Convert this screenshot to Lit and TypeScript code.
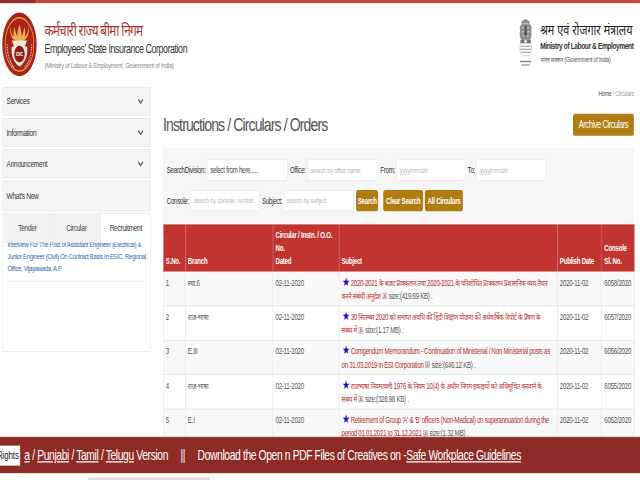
import { LitElement, html, css } from "lit";
import { customElement } from "lit/decorators.js";

const rows = [
  { n: "1", b: "स्था.6", s: "2020-2021 के बजट प्राक्कलन तथा 2020-2021 के परिशोधित प्राक्कलन प्रशासनिक व्यय तैयार करने संबंधी अनुदेश", z: "size:(419.69 KB) .", c: "6058/2020" },
  { n: "2", b: "राज-भाषा", s: "30 सितम्बर 2020 को समाप्त अवधि की हिंदी शिक्षण योजना की अर्धवार्षिक रिपोर्ट के प्रेषण के संबंध\u00A0में", z: "size:(1.17 MB) .", c: "6057/2020" },
  { n: "3", b: "E.III", s: "Corrigendum Memorandum - Continuation of Ministerial / Non Ministerial posts as on 31.03.2019 in ESI Corporation", z: "size:(646.12 KB) .", c: "6056/2020" },
  { n: "4", b: "राज-भाषा", s: "राजभाषा नियमावली 1976 के नियम 10(4) के अधीन निगम इकाइयों को अधिसूचित करवाने के संबंध\u00A0में", z: "size:(328.98 KB) .", c: "6055/2020" },
  { n: "5", b: "E.I", s: "Retirement of Group 'A' & 'B' officers (Non-Medical) on superannuation during the period 01.01.2021 to 31.12.2021", z: "size:(1.32 MB) .", c: "6052/2020" },
];

const pdf = html`<svg class="pdf" viewBox="0 0 14 14"><rect x="1" y="1" width="12" height="12" fill="#e4e4e4" stroke="#999"/><path d="M3 11C6 9 7 6 6.500 3 8 7 9 9 11.500 9.500 8 9 5 10 3 11Z" fill="none" stroke="#a33" stroke-width="1"/></svg>`;

const logo = html`<svg class="logo" viewBox="0 0 100 100" preserveAspectRatio="none">
  <ellipse cx="50" cy="50" rx="49" ry="49" fill="#a8241b"/>
  <ellipse cx="50" cy="50" rx="41" ry="41" fill="none" stroke="#e2a83a" stroke-width="2"/>
  <path d="M24 22C26 30 28 36 34 38C32 32 34 28 36 23C38 30 40 34 44 38C44 30 47 26 50 19C53 26 56 30 56 38C60 34 62 30 64 23C66 28 68 32 66 38C72 36 74 30 76 22C78 34 74 44 50 46C26 44 22 34 24 22Z" fill="#eeb04a"/>
  <path d="M28 44H72L64 54H36Z" fill="#f6e9d8"/>
  <path d="M28 54C34 52 66 52 72 54C74 68 66 78 50 84C34 78 26 68 28 54Z" fill="#f4ece2"/>
  <ellipse cx="50" cy="65" rx="15" ry="13" fill="#8f1d16"/>
  <text x="50" y="68" class="lt">ESIC</text>
  <path d="M15 50C15 64 22 78 36 86M85 50C85 64 78 78 64 86" fill="none" stroke="#f3d9c4" stroke-width="3" stroke-dasharray="2 2"/>
</svg>`;

const emblem = html`<svg class="emblem" viewBox="0 0 40 100" preserveAspectRatio="none">
  <path d="M14 3C17 0 24 0 26 4C30 4 31 8 30 11C35 13 36 19 34 24C36 30 34 38 31 42H9C5 37 4 29 6 24C4 18 6 13 10 11C9 7 11 4 14 3Z" fill="#8d8d8d"/>
  <path d="M13 10H27M11 18H29M10 26H30M12 34H28" stroke="#dcdcdc" stroke-width="2" fill="none"/>
  <path d="M17 14H23V34H17Z" fill="#555"/>
  <rect x="7" y="42" width="26" height="7" fill="#707070"/>
  <ellipse cx="20" cy="45" rx="4" ry="3" fill="#ddd"/>
  <path d="M8 49C4 58 5 68 12 74H28C35 68 36 58 32 49Z" fill="#fff" stroke="#999" stroke-width="1"/>
  <path d="M8 55H32M7 61H33M9 67H31" stroke="#888" stroke-width="2" fill="none"/>
  <rect x="6" y="84" width="28" height="3" fill="#888"/><rect x="9" y="91" width="22" height="3" fill="#aaa"/>
</svg>`;

@customElement("app-root")
export class AppRoot extends LitElement {
  static styles = css`
    :host { display: block; width: 640px; height: 480px; overflow: hidden; position: relative; background: #fff; }
    .page { width: 1366px; height: 768px; transform: scale(0.4685, 0.625); transform-origin: 0 0; font-family: "Liberation Sans", "Noto Sans", "Noto Sans Devanagari", sans-serif; font-size: 13px; letter-spacing: -0.5px; color: #555; position: relative; background: #fff; overflow: hidden; }
    .top { height: 5px; background: #c6463f; }
    .top div { width: 75px; height: 5px; background: #8e2f2a; }
    header { height: 130px; display: flex; justify-content: space-between; padding: 14px 13px 0 4px; box-sizing: border-box; }
    .brand { display: flex; gap: 16px; }
    .logo { width: 75px; height: 104px; }
    .lt { font-size: 9px; font-weight: 700; fill: #fff; text-anchor: middle; font-family: "Liberation Sans", sans-serif; }
    .names { display: flex; flex-direction: column; padding-top: 15px; }
    .hi { font-size: 25px; letter-spacing: -1.500px; line-height: 30px; color: #a9322b; white-space: nowrap; }
    .en { font-size: 19px; letter-spacing: -0.950px; line-height: 28px; color: #333; margin-top: 1px; white-space: nowrap; }
    .min { font-size: 12px; letter-spacing: -0.450px; line-height: 22px; color: #888; white-space: nowrap; }
    .gov { display: flex; gap: 14px; }
    .emblem { width: 34px; height: 80px; margin-top: 11px; }
    .govtext { display: flex; flex-direction: column; padding-top: 14px; width: 200px; }
    .g1 { font-size: 23px; letter-spacing: 0; line-height: 30px; color: #222; white-space: nowrap; }
    .g2 { font-size: 14px; letter-spacing: -0.800px; line-height: 22px; font-weight: 700; color: #333; white-space: nowrap; }
    .g3 { font-size: 11px; letter-spacing: -0.400px; line-height: 20px; color: #555; white-space: nowrap; }
    .body { display: flex; padding-left: 6px; }
    aside { width: 316px; margin-top: 4px; flex: none; }
    .acc { display: flex; justify-content: space-between; align-items: center; height: 46px; background: #f5f5f5; border: 1px solid #e2e2e2; box-sizing: border-box; padding: 0 14px 0 7px; margin-bottom: 4px; color: #333; font-size: 14px; letter-spacing: -0.600px; }
    .acc.new { height: 49px; margin-bottom: 3px; }
    .chev { width: 14px; height: 10px; }
    .tabbox { border: 1px solid #e4e4e4; height: 222px; box-sizing: border-box; width: 316px; overflow: hidden; background: #fff; }
    .tabs { display: grid; grid-template-columns: 104px 105px 1fr; height: 46px; }
    .tab { display: flex; align-items: center; justify-content: center; background: #f2f2f2; border-right: 1px solid #e4e4e4; border-bottom: 1px solid #e4e4e4; font-size: 14px; letter-spacing: -0.600px; color: #444; }
    .tab.on { background: #fff; border: none; color: #333; }
    .news { height: 174px; overflow: hidden; padding: 0 8px 0 9px; }
    .news p { margin: -6px 0 0; font-size: 12.500px; letter-spacing: -0.600px; line-height: 19px; color: #2f69b3; }
    .news hr { border: 0; border-top: 2px solid #eee; margin: 10px 6px 0 0; }
    main { flex: 1; margin-left: 26px; width: 1005px; padding-right: 13px; position: relative; }
    .crumb { text-align: right; font-size: 11px; letter-spacing: -0.400px; line-height: 14px; padding: 8px 0 0; color: #999; }
    .crumb b { font-weight: 400; color: #444; }
    .titlerow { display: flex; justify-content: space-between; align-items: center; height: 34px; margin-top: 25px; }
    h1 { margin: 0; font-size: 30px; letter-spacing: -1.900px; font-weight: 400; color: #555; }
    .btn { background: #b07d12; color: #fff; border-radius: 4px; display: inline-flex; align-items: center; justify-content: center; font-size: 13px; height: 34px; box-sizing: border-box; font-weight: 700; flex: none; }
    .arch { width: 130px; font-size: 16px; letter-spacing: -0.900px; font-weight: 400; height: 35px; }
    .filter { background: #f6f6f6; height: 122px; margin-top: 21px; padding: 18px 0 0 8px; box-sizing: border-box; display: flex; flex-direction: column; gap: 15px; }
    .line { display: flex; align-items: center; color: #333; white-space: nowrap; }
    .inp { background: #fff; border: 1px solid #e4e4e4; height: 34px; box-sizing: border-box; display: flex; align-items: center; padding: 0 6px; color: #bbb; font-size: 12px; overflow: hidden; white-space: nowrap; flex: none; margin: 0 5px 0 3px; }
    .inp.sel { color: #444; font-size: 13px; }
    .w1 { width: 172px; } .w2 { width: 151px; } .w3 { width: 147px; } .w4 { width: 148px; } .w5 { width: 150px; }
    .l { flex: none; }
    .btn.s1 { width: 47px; } .btn.s2 { width: 85px; margin-left: 11px; } .btn.s3 { width: 81px; margin-left: 4px; }
    table { border-collapse: collapse; table-layout: fixed; width: 1005px; }
    th { background: #c0352f; color: #fff; text-align: left; vertical-align: bottom; font-size: 13px; line-height: 21px; padding: 6px 5px 5px; border: 1px solid #d46a65; border-top: 0; height: 75px; box-sizing: border-box; }
    td { vertical-align: top; border: 1px solid #ddd; padding: 7px 5px 4px; font-size: 13px; line-height: 21px; height: 55px; box-sizing: border-box; color: #555; overflow: hidden; }
    td.sub { padding-right: 8px; letter-spacing: -0.550px; }
    tr.odd td { background: #f9f9f9; }
    .subj { color: #b5302c; }
    .star { color: #1212c4; font-size: 19px; line-height: 16px; }
    .pdf { width: 11px; height: 13px; vertical-align: -2px; margin: 0 3px; }
    .size { color: #555; }
    .banner { position: absolute; left: 0; top: 699px; width: 100%; height: 58px; background: #8e2b27; color: #fff; font-size: 22px; letter-spacing: -0.800px; white-space: nowrap; overflow: hidden; border-top: 1px solid #a85a56; box-sizing: border-box; display: flex; align-items: center; }
    .banner .run { margin-left: 52px; }
    .banner u { text-underline-offset: 2px; }
    .rights { position: absolute; left: 0; top: 13px; width: 43px; height: 32px; background: #fff; color: #222; font-size: 17px; letter-spacing: -0.300px; display: flex; align-items: center; justify-content: flex-end; overflow: hidden; padding-right: 3px; box-sizing: border-box; }
    .strip { position: absolute; left: 188px; top: 764px; width: 260px; height: 4px; background: #dcdcdc; }
  `;

  chev() {
    return html`<svg class="chev" viewBox="0 0 14 10"><path d="M2 2L7 8L12 2" fill="none" stroke="#666" stroke-width="2.500"/></svg>`;
  }

  render() {
    return html`<div class="page">
      <div class="top"><div></div></div>
      <header>
        <div class="brand">${logo}
          <div class="names">
            <div class="hi">कर्मचारी राज्य बीमा निगम</div>
            <div class="en">Employees' State Insurance Corporation</div>
            <div class="min">(Ministry of Labour &amp; Employment, Government of India)</div>
          </div>
        </div>
        <div class="gov">${emblem}
          <div class="govtext">
            <div class="g1">श्रम एवं रोजगार मंत्रालय</div>
            <div class="g2">Ministry of Labour &amp; Employment</div>
            <div class="g3">भारत सरकार (Government of India)</div>
          </div>
        </div>
      </header>
      <div class="body">
        <aside>
          <div class="acc">Services ${this.chev()}</div>
          <div class="acc">Information ${this.chev()}</div>
          <div class="acc">Announcement ${this.chev()}</div>
          <div class="acc new">What's New</div>
          <div class="tabbox">
            <div class="tabs"><div class="tab">Tender</div><div class="tab">Circular</div><div class="tab on">Recruitment</div></div>
            <div class="news">
              <p>Interview For The Post of Assistant Engineer (Electrical) &amp; Junior Engineer (Civil) On Contract Basis In ESIC, Regional Office, Vijayawada, A.P</p>
              <hr />
            </div>
          </div>
        </aside>
        <main>
          <div class="crumb"><b>Home</b> / Circulars</div>
          <div class="titlerow"><h1>Instructions / Circulars / Orders</h1><span class="btn arch">Archive Circulars</span></div>
          <div class="filter">
            <div class="line"><span class="l">SearchDivision:</span><div class="inp sel w1">select from here.....</div><span class="l">Office:</span><div class="inp w2">search by office name</div><span class="l">From:</span><div class="inp w3">yyyy/mm/dd</div><span class="l">To:</span><div class="inp w4">yyyy/mm/dd</div></div>
            <div class="line"><span class="l">Console:</span><div class="inp w4">search by console number</div><span class="l">Subject:</span><div class="inp w5">search by subject</div><span class="btn s1">Search</span><span class="btn s2">Clear Search</span><span class="btn s3">All Circulars</span></div>
          </div>
          <table>
            <colgroup><col style="width:47px"/><col style="width:187px"/><col style="width:141px"/><col style="width:466px"/><col style="width:95px"/><col style="width:69px"/></colgroup>
            <thead><tr><th>S.No.</th><th>Branch</th><th>Circular / Instn. / O.O. No.<br />Dated</th><th>Subject</th><th>Publish Date</th><th>Console Sl. No.</th></tr></thead>
            <tbody>
              ${rows.map((r, i) => html`<tr class=${i % 2 ? "" : "odd"}>
                <td>${r.n}</td><td>${r.b}</td><td>02-11-2020</td>
                <td class="sub"><span class="star">★</span> <span class="subj">${r.s}</span>${pdf}<span class="size">${r.z}</span></td>
                <td>2020-11-02</td><td>${r.c}</td></tr>`)}
            </tbody>
          </table>
        </main>
      </div>
      <div class="banner">
        <span class="run"><u>a</u> / <u>Punjabi</u> / <u>Tamil</u> / <u>Telugu</u> Version &nbsp;&nbsp;&nbsp;&nbsp;||&nbsp;&nbsp;&nbsp;&nbsp; Download the Open n PDF Files of Creatives on -<u>Safe Workplace Guidelines</u></span>
        <div class="rights">Rights</div>
      </div>
      <div class="strip"></div>
    </div>`;
  }
}
